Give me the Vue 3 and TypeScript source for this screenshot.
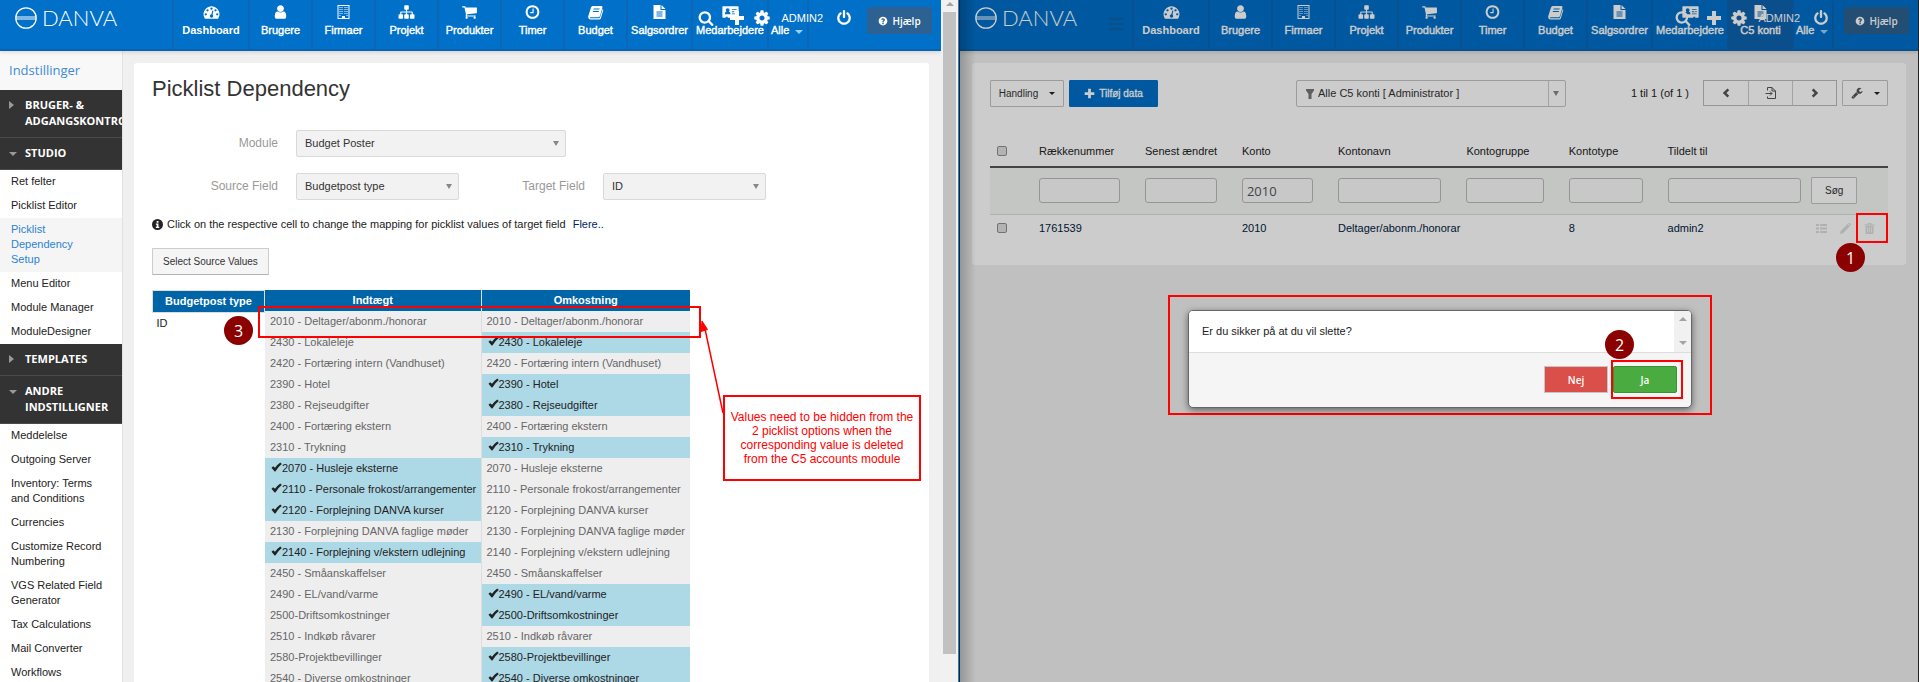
<script setup lang="ts">
interface NavItem { label: string; icon: string; wide?: string }
interface Pane { id: string; nav: NavItem[]; active?: string }

const baseNav: NavItem[] = [
  { label: 'Dashboard', icon: 'gauge', wide: 'w76' },
  { label: 'Brugere', icon: 'user' },
  { label: 'Firmaer', icon: 'building' },
  { label: 'Projekt', icon: 'sitemap' },
  { label: 'Produkter', icon: 'cart' },
  { label: 'Timer', icon: 'clock' },
  { label: 'Budget', icon: 'book' },
  { label: 'Salgsordrer', icon: 'file', wide: 'w65' },
  { label: 'Medarbejdere', icon: 'card', wide: 'w76' },
]
const panes: Pane[] = [
  { id: 'settings', nav: baseNav },
  { id: 'accounts', nav: [...baseNav, { label: 'C5 konti', icon: 'file', wide: 'w65' }], active: 'C5 konti' },
]

const groups = [
  { title: 'BRUGER- & ADGANGSKONTROL', open: false, items: [] as string[] },
  { title: 'STUDIO', open: true, items: ['Ret felter', 'Picklist Editor', 'Picklist Dependency Setup', 'Menu Editor', 'Module Manager', 'ModuleDesigner'] },
  { title: 'TEMPLATES', open: false, items: [] as string[] },
  { title: 'ANDRE INDSTILLIGNER', open: true, items: ['Meddelelse', 'Outgoing Server', 'Inventory: Terms and Conditions', 'Currencies', 'Customize Record Numbering', 'VGS Related Field Generator', 'Tax Calculations', 'Mail Converter', 'Workflows'] },
]

const mapping: { name: string; income?: boolean; cost?: boolean }[] = [
  { name: '2010 - Deltager/abonm./honorar' },
  { name: '2430 - Lokaleleje', cost: true },
  { name: '2420 - Fortæring intern (Vandhuset)' },
  { name: '2390 - Hotel', cost: true },
  { name: '2380 - Rejseudgifter', cost: true },
  { name: '2400 - Fortæring ekstern' },
  { name: '2310 - Trykning', cost: true },
  { name: '2070 - Husleje eksterne', income: true },
  { name: '2110 - Personale frokost/arrangementer', income: true },
  { name: '2120 - Forplejning DANVA kurser', income: true },
  { name: '2130 - Forplejning DANVA faglige møder' },
  { name: '2140 - Forplejning v/ekstern udlejning', income: true },
  { name: '2450 - Småanskaffelser' },
  { name: '2490 - EL/vand/varme', cost: true },
  { name: '2500-Driftsomkostninger', cost: true },
  { name: '2510 - Indkøb råvarer' },
  { name: '2580-Projektbevillinger', cost: true },
  { name: '2540 - Diverse omkostninger', cost: true },
]

const columns = [
  { label: 'Rækkenummer', share: 11.8, filter: '', value: '1761539' },
  { label: 'Senest ændret', share: 10.8, filter: '', value: '' },
  { label: 'Konto', share: 10.7, filter: '2010', value: '2010' },
  { label: 'Kontonavn', share: 14.3, filter: '', value: 'Deltager/abonm./honorar' },
  { label: 'Kontogruppe', share: 11.4, filter: '', value: '' },
  { label: 'Kontotype', share: 11, filter: '', value: '8' },
  { label: 'Tildelt til', share: 16, filter: '', value: 'admin2' },
]
</script>

<template>
  <svg class="sprite" aria-hidden="true">
    <symbol id="gauge" viewBox="0 0 1792 1792"><path d="M384 1152q0-53-37.500-90.500t-90.500-37.500-90.500 37.500-37.500 90.500 37.500 90.500 90.500 37.500 90.500-37.500 37.500-90.500zm192-448q0-53-37.500-90.500t-90.500-37.500-90.500 37.500-37.500 90.500 37.500 90.500 90.500 37.500 90.500-37.500 37.500-90.500zm428 481l101-382q6-26-7.500-48.500t-38.500-29.500-48 6.500-30 39.500l-101 382q-60 5-107 43.500t-63 98.500q-20 77 20 146t117 89 146-20 89-117q16-60-6-117t-72-91zm660-33q0-53-37.500-90.500t-90.500-37.500-90.500 37.500-37.500 90.500 37.500 90.500 90.500 37.500 90.500-37.500 37.500-90.500zm-640-640q0-53-37.500-90.500t-90.500-37.500-90.500 37.500-37.500 90.500 37.500 90.500 90.500 37.500 90.500-37.500 37.500-90.500zm448 192q0-53-37.500-90.500t-90.500-37.500-90.500 37.500-37.500 90.500 37.500 90.500 90.500 37.500 90.500-37.500 37.500-90.500zm320 448q0 261-141 483-19 29-54 29h-1402q-35 0-54-29-141-221-141-483 0-182 71-348t191-286 286-191 348-71 348 71 286 191 191 286 71 348z" /></symbol>
    <symbol id="user" viewBox="0 0 1792 1792"><path d="M1536 1399q0 109-62.500 187t-150.500 78h-854q-88 0-150.500-78t-62.500-187q0-85 8.500-160.500t31.500-152 58.500-131 94-89 134.500-34.500q131 128 313 128t313-128q76 0 134.500 34.500t94 89 58.500 131 31.500 152 8.500 160.500zm-256-887q0 159-112.500 271.500t-271.500 112.500-271.500-112.500-112.500-271.500 112.500-271.500 271.500-112.500 271.500 112.500 112.500 271.500z" /></symbol>
    <symbol id="building" viewBox="0 0 16 16"><path fill-rule="evenodd" d="M2 1h12v14H2zM3 2v12h3.500v-2h3v2H13V2zM4 3h1v1H4zm2 0h1v1H6zm3 0h1v1H9zm2 0h1v1h-1zM4 5h1v1H4zm2 0h1v1H6zm3 0h1v1H9zm2 0h1v1h-1zM4 7h1v1H4zm2 0h1v1H6zm3 0h1v1H9zm2 0h1v1h-1zM4 9h1v1H4zm2 0h1v1H6zm3 0h1v1H9zm2 0h1v1h-1zM4 11h1v1H4zm7 0h1v1h-1z" /></symbol>
    <symbol id="sitemap" viewBox="0 0 1792 1792"><path d="M1792 1248v320q0 40-28 68t-68 28h-320q-40 0-68-28t-28-68v-320q0-40 28-68t68-28h96v-192h-512v192h96q40 0 68 28t28 68v320q0 40-28 68t-68 28h-320q-40 0-68-28t-28-68v-320q0-40 28-68t68-28h96v-192h-512v192h96q40 0 68 28t28 68v320q0 40-28 68t-68 28h-320q-40 0-68-28t-28-68v-320q0-40 28-68t68-28h96v-192q0-52 38-90t90-38h512v-192h-96q-40 0-68-28t-28-68v-320q0-40 28-68t68-28h320q40 0 68 28t28 68v320q0 40-28 68t-68 28h-96v192h512q52 0 90 38t38 90v192h96q40 0 68 28t28 68z" /></symbol>
    <symbol id="cart" viewBox="0 0 1792 1792"><path d="M704 1536q0 52-38 90t-90 38-90-38-38-90 38-90 90-38 90 38 38 90zm896 0q0 52-38 90t-90 38-90-38-38-90 38-90 90-38 90 38 38 90zm128-1088v512q0 24-16.500 42.500t-40.500 21.500l-1044 122q13 60 13 70 0 16-24 64h920q26 0 45 19t19 45-19 45-45 19h-1024q-26 0-45-19t-19-45q0-11 8-31.500t16-36 21.500-40 15.500-29.500l-177-823h-204q-26 0-45-19t-19-45 19-45 45-19h256q16 0 28.500 6.500t19.500 15.500 13 24.500 8 26 5.500 29.500 4.500 26h1201q26 0 45 19t19 45z" /></symbol>
    <symbol id="clock" viewBox="0 0 1792 1792"><path d="M1024 544v448q0 14-9 23t-23 9h-320q-14 0-23-9t-9-23v-64q0-14 9-23t23-9h224v-352q0-14 9-23t23-9h64q14 0 23 9t9 23zm416 352q0-148-73-273t-198-198-273-73-273 73-198 198-73 273 73 273 198 198 273 73 273-73 198-198 73-273zm224 0q0 209-103 385.500t-279.500 279.500-385.500 103-385.500-103-279.500-279.500-103-385.500 103-385.500 279.500-279.500 385.500-103 385.500 103 279.500 279.500 103 385.500z" /></symbol>
    <symbol id="book" viewBox="0 0 16 16"><path fill-rule="evenodd" d="M5.200 2H14q1.300.4.900 1.700l-2.500 8.500Q12 13.300 10.800 13.300H3.200q-1 0-.9.500.1.500 1 .5h8.200q.8 0 1-.8L15.200 5q.8.500.5 1.600l-2.400 7.900Q12.900 15.500 11.700 15.500H3Q.8 15.400.7 13.200.6 12 1.200 10.800L3.500 3.500Q4 2.200 5.200 2zM6.200 4.600 5.900 5.600h6l.3-1zM5.500 7 5.200 8h6l.3-1z" /></symbol>
    <symbol id="file" viewBox="0 0 16 16"><path fill-rule="evenodd" d="M2 1h7v5h5v9H2zM10 1l4 4h-4zM5 7.500v1h6v-1zm0 2v1h6v-1zm0 2v1h6v-1z" /></symbol>
    <symbol id="card" viewBox="0 0 18 16"><path fill-rule="evenodd" d="M1 2h16q.6 0 .6.600v10.800q0 .6-.6.600H14v-1h-2v1H6v-1H4v1H1q-.6 0-.6-.6V2.600Q.4 2 1 2zM3 10.500h6Q9 7.800 7.300 7.500q.7-.7.700-1.700Q8 4 6 4T4 5.800q0 1 .700 1.700Q3 7.800 3 10.500zM10.500 5v1h5V5zm0 2.200v1H13v-1zm3.500 0v1h1.500v-1zm-3.500 2.300v1h5v-1z" /></symbol>
    <symbol id="search" viewBox="0 0 1792 1792"><path d="M1216 832q0-185-131.500-316.500t-316.500-131.500-316.500 131.500-131.500 316.500 131.500 316.500 316.500 131.500 316.500-131.500 131.500-316.500zm512 832q0 52-38 90t-90 38q-54 0-90-38l-343-342q-179 124-399 124-143 0-273.500-55.500t-225-150-150-225-55.500-273.500 55.500-273.500 150-225 225-150 273.500-55.500 273.500 55.500 225 150 150 225 55.500 273.500q0 220-124 399l343 343q37 37 37 90z" /></symbol>
    <symbol id="plus" viewBox="0 0 16 16"><path d="M6 1h4v5h5v4h-5v5H6v-5H1V6h5z" /></symbol>
    <symbol id="cog" viewBox="0 0 1792 1792"><path d="M1152 896q0-106-75-181t-181-75-181 75-75 181 75 181 181 75 181-75 75-181zm512-109v222q0 12-8 23t-20 13l-185 28q-19 54-39 91 35 50 107 138 10 12 10 25t-9 23q-27 37-99 108t-94 71q-12 0-26-9l-138-108q-44 23-91 38-16 136-29 186-7 28-36 28h-222q-14 0-24.500-8.500t-11.500-21.500l-28-184q-49-16-90-37l-141 107q-10 9-25 9-14 0-25-11-126-114-165-168-7-10-7-23 0-12 8-23 15-21 51-66.500t54-70.500q-27-50-41-99l-183-27q-13-2-21-12.500t-8-23.500v-222q0-12 8-23t19-13l186-28q14-46 39-92-40-57-107-138-10-12-10-24 0-10 9-23 26-36 98.500-107.500t94.500-71.500q13 0 26 10l138 107q44-23 91-38 16-136 29-186 7-28 36-28h222q14 0 24.500 8.500t11.500 21.500l28 184q49 16 90 37l142-107q9-9 24-9 13 0 25 10 129 119 165 170 7 8 7 22 0 12-8 23-15 21-51 66.500t-54 70.500q26 50 41 98l183 28q13 2 21 12.500t8 23.500z" /></symbol>
    <symbol id="power" viewBox="0 0 1792 1792"><path d="M1664 896q0 156-61 298t-164 245-245 164-298 61-298-61-245-164-164-245-61-298q0-182 80.500-343t226.500-270q43-32 95.500-25t83.500 50q32 42 24.500 94.500t-49.500 84.500q-98 74-151.500 181t-53.500 228q0 104 40.500 198.500t109.500 163.500 163.500 109.500 198.500 40.500 198.500-40.500 163.500-109.500 109.500-163.500 40.500-198.500q0-121-53.500-228t-151.500-181q-42-32-49.500-84.500t24.500-94.500q31-43 84-50t95 25q146 109 226.500 270t80.500 343zm-640-768v640q0 52-38 90t-90 38-90-38-38-90v-640q0-52 38-90t90-38 90 38 38 90z" /></symbol>
    <symbol id="help" viewBox="0 0 16 16"><path fill-rule="evenodd" d="M8 1a7 7 0 1 0 0 14A7 7 0 0 0 8 1zM7 13v-2.200h2.200V13zM7 9.800Q6.900 8 8.200 7.300 9 6.800 8.900 6.200 8.700 5.400 7.900 5.500 7.100 5.600 6.500 6.500L4.900 5.300Q6 3.500 8.100 3.500q3 .2 3 2.600 0 1.500-1.400 2.200-.7.400-.6 1.500z" /></symbol>
    <symbol id="info" viewBox="0 0 16 16"><path fill-rule="evenodd" d="M8 0a8 8 0 1 0 0 16A8 8 0 0 0 8 0zM6.800 3h2.600v2.300H6.800zM5.600 6.400h3.800v4.800h1.200V13H5.600v-1.800h1.200V8.200H5.600z" /></symbol>
    <symbol id="tick" viewBox="0 0 11 10"><path d="M.5 5.800 2.200 4.200 4 5.700Q6.600 2.200 9.300.4L10.800 2Q7.200 4.800 4.600 9.200 4 9.800 3.400 9.200z" /></symbol>
    <symbol id="wrench" viewBox="0 0 1792 1792"><path d="M448 1472q0-26-19-45t-45-19-45 19-19 45 19 45 45 19 45-19 19-45zm644-420l-682 682q-37 37-90 37-52 0-91-37l-106-108q-38-36-38-90 0-53 38-91l681-681q39 98 114.500 173.500t173.500 114.500zm634-435q0 39-23 106-47 134-164.500 217.500t-258.500 83.500q-185 0-316.500-131.500t-131.500-316.500 131.500-316.500 316.500-131.500q58 0 121.500 16.500t107.500 46.500q16 11 16 28t-16 28l-293 169v224l193 107q5-3 79-48.500t135.500-81 70.500-35.500q15 0 23.500 10t8.500 25z" /></symbol>
    <symbol id="funnel" viewBox="0 0 8 10"><path d="M0 0h8v1.500L5.500 5v5h-3V5L0 1.500z" /></symbol>
    <symbol id="prev" viewBox="0 0 8 10"><path d="M5.500.5 7.200 2.200 4.400 5l2.800 2.800L5.500 9.500.8 5z" /></symbol>
    <symbol id="next" viewBox="0 0 8 10"><path d="M2.500.5.8 2.200 3.600 5 .8 7.800l1.700 1.700L7.200 5z" /></symbol>
    <symbol id="jump" viewBox="0 0 12 12"><path d="M2.500 3.500v-3H7L10.500 4v7.500h-8v-2M7 .5V4h3.500M.5 6.500H7M5 4.500l2 2-2 2" fill="none" stroke="currentColor" /></symbol>
    <symbol id="list" viewBox="0 0 11 9"><path d="M0 0h3v2H0zm4 0h7v2H4zM0 3.500h3v2H0zm4 0h7v2H4zM0 7h3v2H0zm4 0h7v2H4z" /></symbol>
    <symbol id="pencil" viewBox="0 0 11 11"><path d="M0 11 .7 8 7.600 1.100l2.200 2.200L3 10.300zM8.300.5 9 0h.800L11 1.200V2l-.6.700z" /></symbol>
    <symbol id="trash" viewBox="0 0 10 11"><path fill-rule="evenodd" d="M0 1.500h3V0h4v1.500h3v1H0zM4 .8v.7h2V.8zM1 3h8v7.200q0 .8-.8.800H1.800Q1 11 1 10.200zm1.800 1.200v5.400h.7V4.200zm1.900 0v5.400h.7V4.200zm1.900 0v5.400h.7V4.200z" /></symbol>
  </svg>

  <main class="desktop">
    <section v-for="pane in panes" :key="pane.id" class="window" :class="pane.id">
      <div class="page">
        <header class="topbar">
          <a class="logo" href="#">
            <svg class="emblem" viewBox="0 0 22 22">
              <circle cx="11" cy="11" r="10.200" stroke-width="1.300" /><path d="M1 10h20M1 12h20" stroke-width="1" />
            </svg>
            <span>DANVA</span>
          </a>
          <button v-if="pane.id === 'accounts'" class="burger" type="button" aria-label="Menu"><i></i><i></i><i></i></button>
          <nav class="nav">
            <a v-for="item in pane.nav" :key="item.label" href="#" class="nav-item" :class="[item.wide, { current: item.label === pane.active, strong: item.label === 'Dashboard' }]">
              <svg class="nav-icon"><use :href="'#' + item.icon" /></svg>
              <span>{{ item.label }}</span>
            </a>
            <a href="#" class="nav-item all"><span>Alle</span><i class="caret"></i></a>
          </nav>
          <div class="tools">
            <button type="button" class="tool" aria-label="Søg"><svg class="i16"><use href="#search" /></svg></button>
            <button type="button" class="tool add" aria-label="Opret"><svg class="i16"><use href="#plus" /></svg></button>
            <button type="button" class="tool gear" aria-label="Indstillinger"><svg class="i18"><use href="#cog" /></svg></button>
            <a href="#" class="account">ADMIN2</a>
            <button type="button" class="tool" aria-label="Log ud"><svg class="i16"><use href="#power" /></svg></button>
            <button type="button" class="help"><svg class="i10"><use href="#help" /></svg>Hjælp</button>
          </div>
        </header>

        <div v-if="pane.id === 'settings'" class="body">
          <aside class="sidebar">
            <a href="#" class="side-title">Indstillinger</a>
            <div v-for="group in groups" :key="group.title">
              <button type="button" class="group" :class="{ open: group.open }"><i></i><span>{{ group.title }}</span></button>
              <ul v-if="group.items.length" class="links">
                <li v-for="item in group.items" :key="item" :class="{ selected: item === 'Picklist Dependency Setup' }"><a href="#">{{ item }}</a></li>
              </ul>
            </div>
          </aside>
          <div class="content">
            <div class="panel setup">
              <h1>Picklist Dependency</h1>
              <div class="form">
                <label for="module">Module</label>
                <span class="pick wide"><select id="module"><option>Budget Poster</option></select></span>
                <label for="source">Source Field</label>
                <span class="pick"><select id="source"><option>Budgetpost type</option></select></span>
                <label for="target">Target Field</label>
                <span class="pick"><select id="target"><option>ID</option></select></span>
              </div>
              <p class="hint"><svg class="i11"><use href="#info" /></svg><span>Click on the respective cell to change the mapping for picklist values of target field</span><a href="#">Flere..</a></p>
              <button type="button" class="btn">Select Source Values</button>
              <div class="maps">
                <table class="target">
                  <thead><tr><th>Budgetpost type</th></tr></thead>
                  <tbody><tr><td>ID</td></tr></tbody>
                </table>
                <table class="matrix">
                  <thead><tr><th class="income">Indtægt</th><th class="cost">Omkostning</th></tr></thead>
                  <tbody>
                    <tr v-for="row in mapping" :key="row.name">
                      <td :class="{ on: row.income }"><svg v-if="row.income" class="tick"><use href="#tick" /></svg>{{ row.name }}</td>
                      <td :class="{ on: row.cost }"><svg v-if="row.cost" class="tick"><use href="#tick" /></svg>{{ row.name }}</td>
                    </tr>
                  </tbody>
                </table>
              </div>
            </div>
          </div>
        </div>

        <div v-else class="content">
          <div class="panel listing">
            <div class="toolbar">
              <button type="button" class="btn action">Handling<i class="caret dark"></i></button>
              <button type="button" class="btn primary"><svg class="i11"><use href="#plus" /></svg>Tilføj data</button>
              <span class="pick view"><svg class="funnel"><use href="#funnel" /></svg><select id="view" aria-label="Visning"><option>Alle C5 konti [ Administrator ]</option></select></span>
              <span class="range">1 til 1 (of 1 )</span>
              <div class="pager">
                <button type="button" aria-label="Forrige"><svg class="arrow"><use href="#prev" /></svg></button>
                <button type="button" aria-label="Gå til side"><svg class="i12"><use href="#jump" /></svg></button>
                <button type="button" aria-label="Næste"><svg class="arrow"><use href="#next" /></svg></button>
              </div>
              <button type="button" class="btn wrench" aria-label="Værktøjer"><svg class="i12"><use href="#wrench" /></svg><i class="caret dark"></i></button>
            </div>
            <table class="records">
              <colgroup>
                <col class="tick-col" />
                <col v-for="c in columns" :key="c.label" :style="{ width: c.share + '%' }" />
                <col />
              </colgroup>
              <thead>
                <tr><th class="check"><input type="checkbox" aria-label="Vælg alle" /></th><th v-for="c in columns" :key="c.label">{{ c.label }}</th><th></th></tr>
              </thead>
              <tbody>
                <tr class="filters">
                  <td></td>
                  <td v-for="c in columns" :key="c.label" :class="{ last: c.label === 'Tildelt til' }"><input type="text" :value="c.filter" :aria-label="c.label" /></td>
                  <td><button type="button" class="btn find">Søg</button></td>
                </tr>
                <tr class="record">
                  <td class="check"><input type="checkbox" aria-label="Vælg 1761539" /></td>
                  <td v-for="c in columns" :key="c.label"><a v-if="c.value" href="#">{{ c.value }}</a></td>
                  <td>
                    <div class="row-tools">
                      <a href="#" aria-label="Detaljer"><svg class="i11"><use href="#list" /></svg></a>
                      <a href="#" aria-label="Rediger"><svg class="i11"><use href="#pencil" /></svg></a>
                      <a href="#" aria-label="Slet"><svg class="i11"><use href="#trash" /></svg></a>
                    </div>
                  </td>
                </tr>
              </tbody>
            </table>
          </div>
        </div>
      </div>

      <template v-if="pane.id === 'settings'">
        <div class="scrollbar"><i class="up"></i><i class="thumb"></i></div>
        <div class="mark row-mark"></div>
        <svg class="pointer" width="24" height="98" viewBox="0 0 24 98"><path d="M22 93 4 9" stroke="#f00" stroke-width="1.500" fill="none" /><path d="M1 1 6.500 9.500 0 11.500z" fill="#f00" stroke="#f00" /></svg>
        <div class="mark note">Values need to be hidden from the<br />2 picklist options when the<br />corresponding value is deleted<br />from the C5 accounts module</div>
        <b class="badge three">3</b>
      </template>
      <template v-else>
        <div class="shade"></div>
        <div class="edge"></div>
        <div class="mark trash-mark"></div>
        <b class="badge one">1</b>
        <div class="confirm">
          <div class="dialog" role="dialog" aria-label="Bekræft">
            <div class="message"><p>Er du sikker på at du vil slette?</p><div class="mini-scroll"><i class="up"></i><i class="down"></i></div></div>
            <div class="answers">
              <button type="button" class="no">Nej</button>
              <button type="button" class="yes">Ja</button>
            </div>
          </div>
          <div class="mark yes-mark"></div>
          <b class="badge two">2</b>
        </div>
      </template>
    </section>
  </main>
</template>

<style>
body { margin: 0; overflow: hidden; }
</style>

<style scoped>
* { box-sizing: border-box; }
.sprite { position: absolute; width: 0; height: 0; }
.desktop { display: grid; grid-template-columns: 50% 50%; grid-template-columns: round(up, 50%, 1px) 1fr; height: 100vh; overflow: hidden; font: 11px/15px "Liberation Sans", Arial, sans-serif; color: #222; }
.window { position: relative; display: flex; min-width: 0; height: 100vh; overflow: hidden; background: #f0f0f0; }
.settings { border-right: 1px solid #222; box-shadow: inset -1px 0 #1883d7; padding-right: 1px; }
.accounts { border-right: 1px solid #222; }
.page { flex: 1; min-width: 0; }
a { color: inherit; text-decoration: none; }
button, input, select { font: inherit; color: inherit; margin: 0; }
button { padding: 0; border: 0; background: none; }
svg { display: block; fill: currentColor; flex: none; }
.i10 { width: 10px; height: 10px; }
.i11 { width: 11px; height: 11px; }
.i12 { width: 12px; height: 12px; }
.i16 { width: 16px; height: 16px; }
.i18 { width: 18px; height: 18px; }

.topbar { position: relative; display: flex; height: 51px; background: #0070c9; border-bottom: 2px solid #0c62b2; color: #fff; box-shadow: 0 1px 4px rgba(0, 0, 0, .15); }
.logo { display: flex; width: 172px; flex: none; padding: 7px 0 0 15px; gap: 5px; font: 300 22px/22px Lato, "Liberation Sans", sans-serif; }
.emblem { width: 22px; height: 22px; fill: none; stroke: currentColor; }
.burger { position: absolute; left: 149px; top: 18px; display: grid; gap: 3px; width: 15px; }
.burger i { height: 2px; background: #0c64ab; }
.nav { display: flex; }
.nav-item { display: flex; flex-direction: column; align-items: center; gap: 3px; width: 63px; padding-top: 4px; border-left: 2px solid #0c65b5; white-space: nowrap; line-height: 15px; -webkit-text-stroke: .4px #fff; }
.nav-item.strong { font-weight: bold; -webkit-text-stroke: 0; }
.nav-item.w76 { width: 76px; }
.nav-item.w65 { width: 65px; }
.nav-item.current { background: #0e62af; }
.nav-icon { width: 17px; height: 16px; }
.nav-item.all { flex-direction: row; align-items: flex-start; gap: 6px; width: 42px; padding: 23px 0 0 2px; border-right: 2px solid #0c65b5; }
.caret { width: 0; height: 0; border: 4px solid transparent; border-top-color: #9cd0f5; border-bottom: 0; }
.all .caret { margin-top: 7px; }
.caret.dark { border-width: 3px; border-top-color: #222; border-bottom: 0; }
.tools { position: absolute; right: 9px; top: 7px; display: flex; align-items: center; height: 22px; }
.tool.add { margin-left: 15px; }
.tool.gear { margin-left: 8px; }
.account { margin: 0 13px 0 10px; }
.help { display: flex; align-items: center; justify-content: center; gap: 4px; align-self: flex-start; width: 65px; height: 27px; margin-left: 15px; border-radius: 2px; background: #2d6191; font: 600 10px/14px "Open Sans", sans-serif; }

.body { display: flex; }
.sidebar { width: 122px; flex: none; background: #fff; box-shadow: 1px 0 #e2e2e2; }
.side-title { display: block; height: 39px; padding: 9px 9px 0; background: #f8f8f8; color: #3c8cd6; font: 13px/20px "Open Sans", sans-serif; }
.group { display: flex; width: 100%; padding: 7px 0 8px 9px; background: #333; border-bottom: 1px solid #4a4a4a; color: #fff; font: bold 11px/16px "Open Sans", sans-serif; text-align: left; overflow: hidden; }
.group i { width: 0; height: 0; margin: 4px 11px 0 0; border: 4px solid transparent; border-left: 5px solid #999; border-right: 0; }
.group span { width: 84px; }
.group.open i { margin: 7px 8px 0 0; border: 4px solid transparent; border-top-color: #999; border-bottom: 0; }
.links { margin: 0; padding: 0; list-style: none; }
.links li { padding: 4px 19px 5px 11px; }
.links .selected { background: #f5f5f5; color: #2b83d3; }
.content { flex: 1; min-width: 0; padding: 12px; }
.panel { background: #fff; border-radius: 3px; padding: 0 18px; }
.setup { min-height: 640px; }
h1 { margin: 0; padding-top: 13px; font-size: 22px; line-height: 26px; font-weight: normal; color: #333; }
.form { display: grid; grid-template-columns: 126px 163px 108px 163px; gap: 16px 18px; align-items: center; margin-top: 28px; }
.form label { text-align: right; font-size: 12px; color: #999; }
.pick { position: relative; display: flex; height: 27px; border: 1px solid #d9d9d9; border-radius: 2px; background: #f2f2f2; color: #333; }
.pick.wide { grid-column: span 3; width: 270px; }
.pick select { flex: 1; min-width: 0; appearance: none; border: 0; background: none; padding: 0 20px 0 8px; outline: 0; }
.pick::after { content: ""; position: absolute; right: 6px; top: 10px; border: 3px solid transparent; border-top: 5px solid #888; border-bottom: 0; }
.hint { display: flex; align-items: center; gap: 4px; margin: 17px 0 16px; white-space: nowrap; }
.hint a { margin-left: 3px; color: #00246b; }
.btn { display: flex; align-items: center; justify-content: center; height: 27px; padding: 0 10px; border: 1px solid #ccc; border-bottom-color: #b3b3b3; border-radius: 1px; background: #f5f5f5; font-size: 10px; color: #333; }
.maps { display: flex; align-items: flex-start; margin-top: 15px; }
table { border-collapse: collapse; border-spacing: 0; }
th, td { padding: 0; text-align: left; font-weight: normal; }
.target th, .matrix th { background: #0065a8; color: #fff; font-weight: bold; text-align: center; }
.target { width: 113px; }
.target th { height: 22px; border: 1px solid #ddd; }
.target td { padding: 3px 4px; }
.matrix th { height: 21px; }
.matrix th.income { width: 216px; }
.matrix th.cost { width: 209px; }
.matrix th + th, .matrix td + td { border-left: 1px solid #ddd; }
.matrix td { height: 21px; padding-left: 5px; background: #eee; color: #666; white-space: nowrap; }
.matrix td.on { background: #add8e6; color: #222; }
.tick { display: inline-block; width: 11px; height: 10px; margin-left: 1px; }

.scrollbar { position: relative; width: 17px; height: 100%; flex: none; background: #f1f1f1; }
.thumb { position: absolute; left: 2px; top: 12px; width: 13px; height: 642px; background: #c1c1c1; }
.up, .down { position: absolute; border: 4px solid transparent; }
.up { border-bottom-color: #a3a3a3; border-top: 0; left: 5px; top: 2px; }
.down { border-top-color: #a3a3a3; border-bottom: 0; }

.listing { height: 202px; }
.toolbar { display: flex; padding-top: 17px; }
.listing .btn { background: #fff; border-color: #c4c4c4; }
.listing .action { width: 74px; gap: 11px; }
.listing .primary { width: 89px; margin-left: 5px; gap: 4px; background: #0070c9; border-color: #0070c9; color: #fff; -webkit-text-stroke: .3px #fff; }
.view { width: 270px; margin-left: 138px; align-items: center; background: #fff; border-color: #c4c4c4; padding-left: 9px; }
.view select { padding-left: 4px; height: 25px; }
.view::before { content: ""; position: absolute; right: 16px; top: 0; bottom: 0; border-left: 1px solid #ccc; }
.funnel { width: 8px; height: 10px; color: #777; }
.range { margin: 6px 14px 0 auto; }
.pager { display: flex; height: 26px; border: 1px solid #bbb; color: #555; }
.pager button { display: grid; place-items: center; width: 44px; }
.pager button + button { border-left: 1px solid #ccc; }
.arrow { width: 8px; height: 10px; }
.listing .wrench { width: 46px; height: 26px; padding: 0; margin-left: 5px; gap: 11px; color: #555; }
.records { width: 100%; margin-top: 29px; table-layout: fixed; }
.tick-col { width: 44px; }
.records th { height: 31px; padding-left: 5px; border-bottom: 2px solid #555; }
.records td { padding-left: 5px; white-space: nowrap; }
.records td.check, .records th.check { padding-left: 7px; }
.check input { display: block; appearance: none; width: 10px; height: 10px; border: 1px solid #8f8f8f; border-radius: 2px; background: #e0e0e0; }
.filters td { height: 47px; padding-right: 20px; background: #f5f8f6; border-bottom: 1px solid #ddd; }
.filters td.last { padding-right: 5px; }
.filters td:last-child { padding-right: 0; }
.filters input { display: block; width: 100%; height: 25px; padding: 0 4px; border: 1px solid #bbb; border-radius: 3px; background: #fafafa; color: #555; font: 13px/20px "Open Sans", sans-serif; }
.find { width: 46px; }
.record td { height: 28px; }
.record a { color: #001a3d; }
.row-tools { display: flex; gap: 13px; padding-left: 5px; }
.record .row-tools a { color: #dcdcdc; }

.shade { position: absolute; inset: 0; background: rgba(0, 0, 0, .2); }
.edge { position: absolute; left: 0; top: 0; bottom: 0; width: 16px; background: linear-gradient(90deg, rgba(0, 0, 0, .22), transparent); }
.mark { position: absolute; border: 2px solid #f00; }
.row-mark { left: 258px; top: 306px; width: 443px; height: 32px; }
.note { left: 723px; top: 395px; width: 198px; height: 86px; padding-top: 13px; background: #fff; color: #f00; font-size: 12px; line-height: 14px; text-align: center; white-space: nowrap; }
.pointer { position: absolute; left: 701px; top: 320px; }
.badge { position: absolute; display: grid; place-items: center; width: 29px; height: 29px; border-radius: 50%; background: #8b0000; color: #fff; font: 16px/16px "Open Sans", sans-serif; }
.three { left: 224px; top: 316px; }
.trash-mark { right: 30px; top: 213px; width: 32px; height: 30px; }
.one { right: 53px; top: 243px; }
.confirm { position: absolute; top: 295px; left: 50%; width: 544px; height: 120px; margin-left: -271px; padding: 13px 18px; border: 2px solid #f00; }
.dialog { border: 1px solid #666; border-radius: 5px; background: #f5f5f5; box-shadow: 0 2px 7px rgba(0, 0, 0, .5); overflow: hidden; }
.message { position: relative; height: 42px; padding: 13px; background: #fff; border-bottom: 1px solid #ddd; }
.message p { margin: 0; }
.mini-scroll { position: absolute; right: 0; top: 0; width: 17px; height: 41px; background: #f1f1f1; }
.mini-scroll .up { top: 6px; }
.mini-scroll .down { left: 5px; bottom: 7px; }
.answers { display: flex; justify-content: flex-end; gap: 5px; height: 54px; padding: 13px 14px 0 0; }
.answers button { width: 64px; height: 27px; border: 1px solid #c5c5c5; background: #da4f49; color: #fff; font: 600 10px/14px "Open Sans", sans-serif; }
.answers .yes { border-color: #3c9133; border-radius: 2px; background: #49ab40; }
.yes-mark { right: 27px; top: 63px; width: 72px; height: 39px; }
.two { right: 76px; top: 33px; }
</style>
